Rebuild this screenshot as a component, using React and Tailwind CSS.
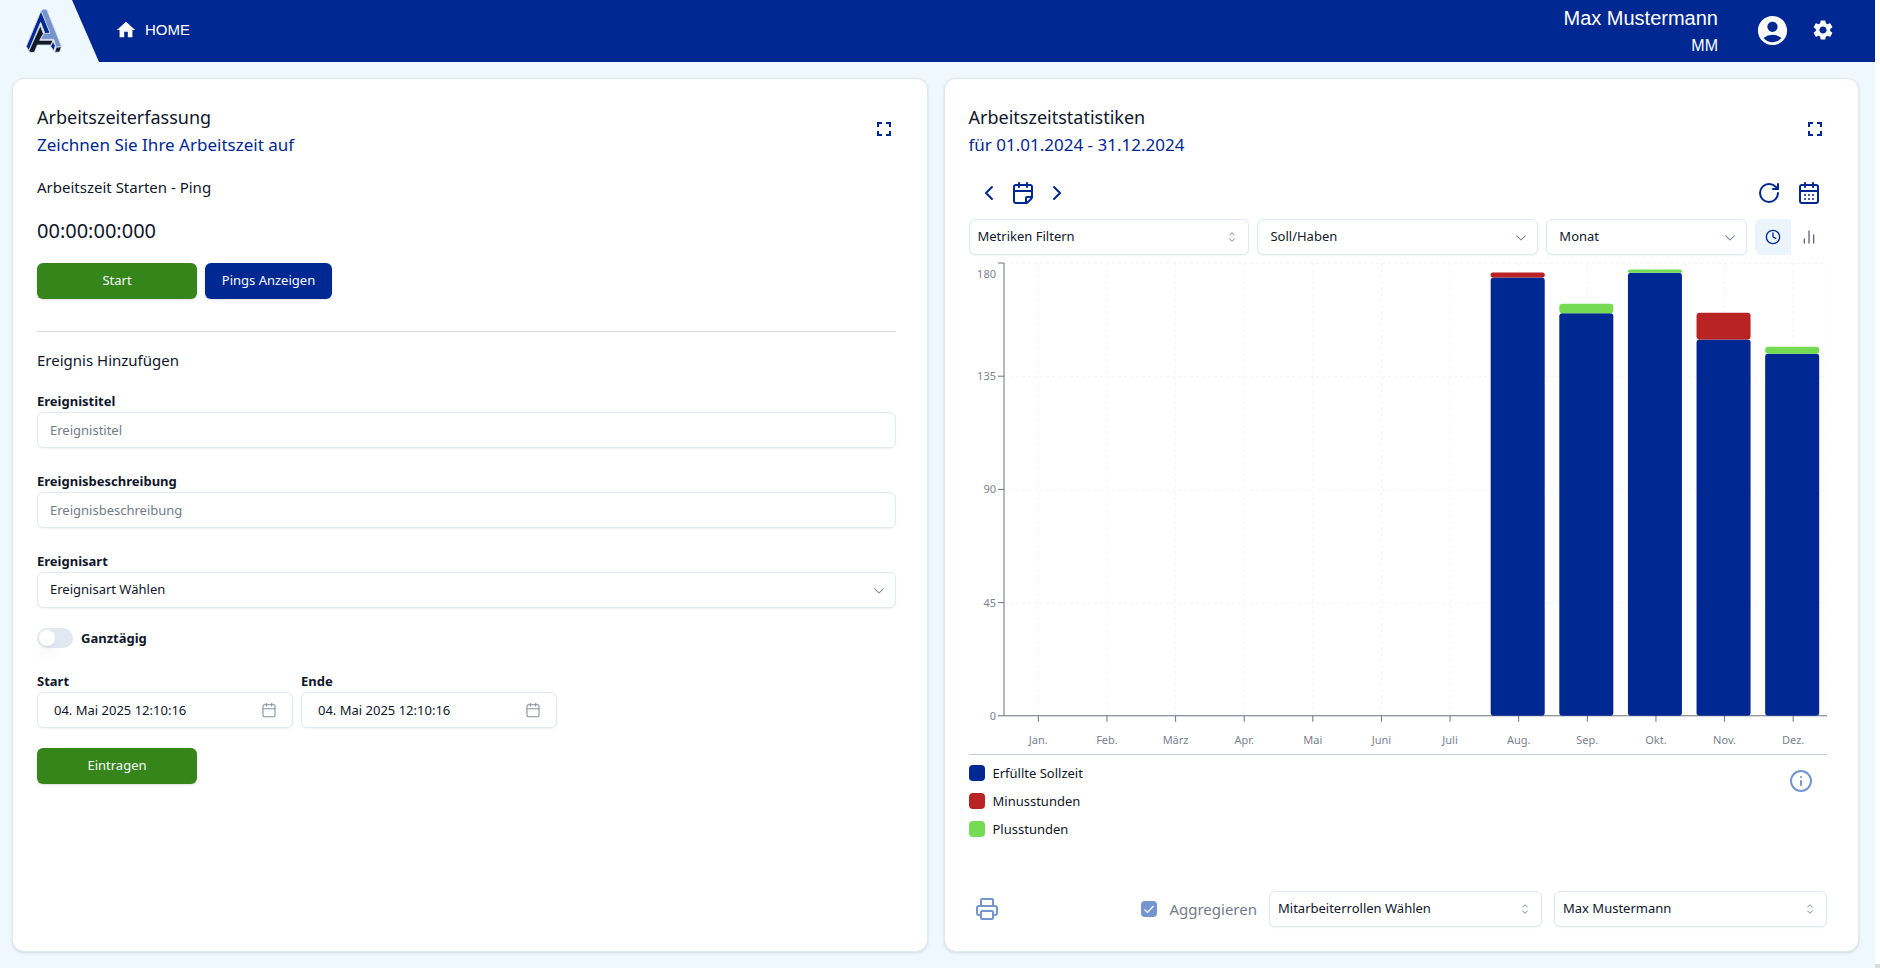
import { ChevronLeft, ChevronRight, CalendarFold, CalendarDays, RotateCw, Clock, ChartNoAxesColumn, Printer, Info, Calendar } from "lucide-react";
import { MdHome, MdSettings, MdAccountCircle, MdFullscreen } from "react-icons/md";

const MONTHS = ["Jan.", "Feb.", "März", "Apr.", "Mai", "Juni", "Juli", "Aug.", "Sep.", "Okt.", "Nov.", "Dez."];

const BARS = [
  { month: 7, base: 174.2, extra: 2, kind: "minus" },
  { month: 8, base: 160, extra: 3.8, kind: "plus" },
  { month: 9, base: 176.1, extra: 1.3, kind: "plus" },
  { month: 10, base: 149.6, extra: 10.6, kind: "minus" },
  { month: 11, base: 143.9, extra: 2.8, kind: "plus" },
];

const TICKS = [0, 45, 90, 135, 180];

const LEGEND = [
  { label: "Erfüllte Sollzeit", swatch: "bg-[#002893]" },
  { label: "Minusstunden", swatch: "bg-[#b82424]" },
  { label: "Plusstunden", swatch: "bg-[#74db52]" },
];

function Logo() {
  return (
    <svg viewBox="0 0 108 132" className="h-11 w-9" aria-label="Logo">
      <g stroke="#d3dae6" strokeWidth="2.5" strokeLinejoin="round">
        <path fill="#7794cf" d="M49 1H62L106 112L91 115L83 91H44L53 73H71L46 7Z" />
        <path fill="#002893" d="M45 6L72 72L57 74L44 40L14 112L8 125L1 112Z" />
        <path fill="#111827" d="M43 50L52 74L41 94H81L75 108H34L25 130H11L9 125Z" />
        <path fill="#002893" d="M81 98L88 110L83 125L74 112Z" />
        <path fill="#111827" d="M91 115L106 113L101 129L86 130Z" />
      </g>
    </svg>
  );
}

function ChevronDownIcon({ className }) {
  return (
    <svg viewBox="0 0 15 15" fill="currentColor" className={className} aria-hidden="true">
      <path d="M3.135 6.158a.5.5 0 0 1 .707-.023L7.5 9.565l3.658-3.43a.5.5 0 0 1 .684.73l-4 3.75a.5.5 0 0 1-.684 0l-4-3.75a.5.5 0 0 1-.023-.707Z" />
    </svg>
  );
}

function CaretSortIcon({ className }) {
  return (
    <svg viewBox="0 0 15 15" fill="none" stroke="currentColor" strokeWidth="0.9" strokeLinecap="round" strokeLinejoin="round" className={className} aria-hidden="true">
      <path d="M5.25 5.75 7.5 3.5l2.25 2.25M5.25 9.25 7.5 11.5l2.25-2.25" />
    </svg>
  );
}

function Select({ id, label, value, caret, className, pad }) {
  const Icon = caret ? CaretSortIcon : ChevronDownIcon;
  return (
    <div className={`relative ${className}`}>
      <select
        id={id}
        aria-label={label}
        className={`h-9 w-full appearance-none rounded-md border border-[#e2e8f0] bg-white text-[13px] text-[#0f172a] shadow-xs ${pad}`}
      >
        <option>{value}</option>
      </select>
      <Icon className="pointer-events-none absolute top-2.5 right-[9px] size-4 text-[#7b8594]" />
    </div>
  );
}

function Field({ id, label }) {
  return (
    <div className="flex flex-col">
      <label htmlFor={id} className="text-[13px] leading-[22px] font-bold">{label}</label>
      <input
        id={id}
        type="text"
        placeholder={label}
        className="h-9 w-full rounded-md border border-[#e2e8f0] px-3 text-[13px] shadow-xs placeholder:text-[#737b8a]"
      />
    </div>
  );
}

function DateField({ id, label }) {
  return (
    <div className="flex w-64 flex-col">
      <label htmlFor={id} className="text-[13px] leading-[22px] font-bold">{label}</label>
      <div className="relative">
        <input
          id={id}
          type="text"
          defaultValue="04. Mai 2025 12:10:16"
          className="h-9 w-full rounded-md border border-[#e2e8f0] px-4 text-[13px] shadow-xs"
        />
        <Calendar className="pointer-events-none absolute top-2.5 right-4 size-4 text-[#868d9b]" strokeWidth={1.6} />
      </div>
    </div>
  );
}

function Card({ title, subtitle, children }) {
  return (
    <section className="flex min-w-0 flex-1 flex-col rounded-xl border border-[#e2e8f0] bg-white pt-6 pr-[31px] pb-6 pl-6 shadow-sm">
      <div className="flex items-start justify-between">
        <div>
          <h2 className="text-lg leading-7">{title}</h2>
          <p className="text-[17px] leading-7 text-[#002893]">{subtitle}</p>
        </div>
        <button type="button" aria-label="Vollbild" className="mt-3.5 text-[#002893]">
          <MdFullscreen className="size-6" />
        </button>
      </div>
      {children}
    </section>
  );
}

function TimeTracking() {
  return (
    <Card title="Arbeitszeiterfassung" subtitle="Zeichnen Sie Ihre Arbeitszeit auf">
      <p className="mt-4 text-[15px] leading-6">Arbeitszeit Starten - Ping</p>
      <p className="mt-4 text-xl leading-8">00:00:00:000</p>
      <div className="mt-4 flex gap-2">
        <button type="button" className="h-9 w-40 rounded-md bg-[#36851b] text-[13px] text-slate-50 shadow-sm">Start</button>
        <button type="button" className="h-9 w-[127px] rounded-md bg-[#002893] text-[13px] text-slate-50 shadow-sm">Pings Anzeigen</button>
      </div>
      <hr className="mt-8 border-[#dcdde0]" />
      <h3 className="mt-4 text-[15px] leading-6">Ereignis Hinzufügen</h3>
      <form className="mt-[18px] flex flex-col">
        <div className="flex flex-col gap-[22px]">
          <Field id="title" label="Ereignistitel" />
          <Field id="description" label="Ereignisbeschreibung" />
          <div className="flex flex-col">
            <label htmlFor="kind" className="text-[13px] leading-[22px] font-bold">Ereignisart</label>
            <Select id="kind" value="Ereignisart Wählen" pad="pl-3 pr-8" className="w-full" />
          </div>
        </div>
        <label className="mt-5 flex items-center gap-2 text-[13px] leading-5 font-bold">
          <input type="checkbox" role="switch" className="peer sr-only" />
          <span className="flex h-5 w-9 rounded-full bg-[#e2e8f0] p-0.5 peer-checked:justify-end">
            <span className="size-4 rounded-full bg-white shadow-lg" />
          </span>
          Ganztägig
        </label>
        <div className="mt-[22px] flex gap-2">
          <DateField id="from" label="Start" />
          <DateField id="to" label="Ende" />
        </div>
        <button type="button" className="mt-5 h-9 w-40 rounded-md bg-[#36851b] text-[13px] text-slate-50 shadow-sm">Eintragen</button>
      </form>
    </Card>
  );
}

const AXIS_X = 35;
const RIGHT = 858;
const TOP = 8;
const BOTTOM = 460.5;
const STEP = (RIGHT - AXIS_X) / 12;
const yOf = (v) => BOTTOM - (v / 180) * (BOTTOM - TOP);
const xOf = (i) => AXIS_X + STEP * (i + 0.5);

function Chart() {
  return (
    <svg viewBox="0 0 858 495" className="w-full text-[11px]" role="img" aria-label="Arbeitszeit pro Monat">
      <g stroke="#f1f4fa" strokeDasharray="3 3">
        {TICKS.slice(1).map((t) => <line key={t} x1={AXIS_X} x2={RIGHT} y1={yOf(t) + 0.5} y2={yOf(t) + 0.5} />)}
        {MONTHS.map((m, i) => <line key={m} x1={xOf(i)} x2={xOf(i)} y1={TOP} y2={BOTTOM} />)}
        <line x1={RIGHT - 0.5} x2={RIGHT - 0.5} y1={TOP} y2={BOTTOM} />
      </g>
      <g stroke="#6b7280">
        <line x1={AXIS_X} x2={AXIS_X} y1={TOP} y2={BOTTOM} />
        <line x1={AXIS_X} x2={RIGHT} y1={BOTTOM} y2={BOTTOM} />
        {TICKS.map((t) => <line key={t} x1={AXIS_X - 6} x2={AXIS_X} y1={yOf(t)} y2={yOf(t)} />)}
        {MONTHS.map((m, i) => <line key={m} x1={xOf(i)} x2={xOf(i)} y1={BOTTOM} y2={BOTTOM + 6} />)}
      </g>
      <g fill="#7b8290">
        {TICKS.map((t) => (
          <text key={t} x={AXIS_X - 8} y={t === 180 ? 23 : yOf(t) + 4} textAnchor="end">{t}</text>
        ))}
        {MONTHS.map((m, i) => <text key={m} x={xOf(i)} y="489" textAnchor="middle">{m}</text>)}
      </g>
      {BARS.map((b) => (
        <g key={b.month}>
          <rect x={xOf(b.month) - 28} width="54" y={yOf(b.base)} height={BOTTOM - yOf(b.base)} rx="3" fill="#002893" />
          <rect
            x={xOf(b.month) - 28}
            width="54"
            y={yOf(b.base + b.extra)}
            height={yOf(b.base) - yOf(b.base + b.extra)}
            rx={b.extra > 2.5 ? 3 : 2}
            fill={b.kind === "plus" ? "#74db52" : "#b82424"}
          />
        </g>
      ))}
    </svg>
  );
}

function Statistics() {
  return (
    <Card title="Arbeitszeitstatistiken" subtitle="für 01.01.2024 - 31.12.2024">
      <div className="mt-4 flex h-9 items-center justify-between pr-1.5 pl-2 text-[#002893]">
        <div className="flex gap-2.5">
          <button type="button" aria-label="Zurück"><ChevronLeft className="size-6" /></button>
          <button type="button" aria-label="Zeitraum"><CalendarFold className="size-6" /></button>
          <button type="button" aria-label="Weiter"><ChevronRight className="size-6" /></button>
        </div>
        <div className="flex gap-4">
          <button type="button" aria-label="Neu laden"><RotateCw className="size-6" /></button>
          <button type="button" aria-label="Kalender"><CalendarDays className="size-6" /></button>
        </div>
      </div>
      <div className="mt-2 flex gap-2">
        <Select label="Metriken" value="Metriken Filtern" caret pad="pl-2 pr-8" className="flex-[7]" />
        <Select label="Ansicht" value="Soll/Haben" pad="pl-3 pr-8" className="flex-[7]" />
        <Select label="Intervall" value="Monat" pad="pl-3 pr-8" className="flex-[5]" />
        <div className="flex">
          <button type="button" aria-label="Zeit" className="flex size-9 items-center justify-center rounded-l-md bg-[#edf5fc] text-[#002893]">
            <Clock className="size-4" />
          </button>
          <button type="button" aria-label="Anzahl" className="flex size-9 items-center justify-center rounded-r-md text-[#64687a]">
            <ChartNoAxesColumn className="size-4" />
          </button>
        </div>
      </div>
      <Chart />
      <div className="mt-1 flex items-start justify-between border-t border-[#c3cbdd] pt-1">
        <ul>
          {LEGEND.map((l) => (
            <li key={l.label} className="flex h-7 items-center gap-2 text-[13px]">
              <span className={`size-4 rounded-sm ${l.swatch}`} />
              {l.label}
            </li>
          ))}
        </ul>
        <button type="button" aria-label="Info" className="mt-2.5 mr-3.5 text-[#7694cf]"><Info className="size-6" /></button>
      </div>
      <div className="mt-auto flex items-center">
        <button type="button" aria-label="Drucken" className="ml-1.5 text-[#7694cf]"><Printer className="size-6" /></button>
        <div className="ml-auto flex items-center gap-3">
          <label className="flex items-center gap-3 text-[15px] text-[#757c8a]">
            <span className="relative flex">
              <input type="checkbox" defaultChecked className="size-4 appearance-none rounded-sm bg-[#7694cf]" />
              <svg viewBox="0 0 16 16" fill="none" stroke="white" strokeWidth="1.2" className="pointer-events-none absolute inset-0 size-4" aria-hidden="true">
                <path d="M3.5 8.5 6.5 11.5 12.5 5" />
              </svg>
            </span>
            Aggregieren
          </label>
          <Select label="Mitarbeiterrollen" value="Mitarbeiterrollen Wählen" caret pad="pl-2 pr-8" className="w-[273px]" />
          <Select label="Mitarbeiter" value="Max Mustermann" caret pad="pl-2 pr-8" className="w-[273px]" />
        </div>
      </div>
    </Card>
  );
}

export default function App() {
  return (
    <div className="flex min-h-screen bg-white">
      <div className="flex min-w-0 flex-1 flex-col bg-[#f0f8ff] font-['Noto_Sans',sans-serif] text-[#0f172a]">
        <header className="flex h-[62px] items-center bg-[#002893] font-['Liberation_Sans',sans-serif] text-white">
          <a href="#" aria-label="Startseite" className="flex h-full w-[99px] items-center bg-[#f0f8ff] pl-[26px] [clip-path:polygon(0_0,72px_0,100%_100%,0_100%)]">
            <Logo />
          </a>
          <a href="#" className="ml-4 flex items-center gap-2 pb-0.5 text-[15px]">
            <MdHome className="size-[22px]" />
            HOME
          </a>
          <div className="ml-auto flex flex-col items-end pt-0.5">
            <span className="text-xl leading-7">Max Mustermann</span>
            <span className="text-base leading-7">MM</span>
          </div>
          <div className="mr-10 ml-[37px] flex items-center gap-[21px] pb-0.5">
            <button type="button" aria-label="Profil"><MdAccountCircle className="size-[35px]" /></button>
            <button type="button" aria-label="Einstellungen"><MdSettings className="size-6" /></button>
          </div>
        </header>
        <main className="flex flex-1 gap-4 pt-4 pr-4 pb-4 pl-3">
          <TimeTracking />
          <Statistics />
        </main>
      </div>
      <div className="flex w-[5px] items-end bg-white">
        <div className="h-1 w-full bg-[#dcdcdc]" />
      </div>
    </div>
  );
}
